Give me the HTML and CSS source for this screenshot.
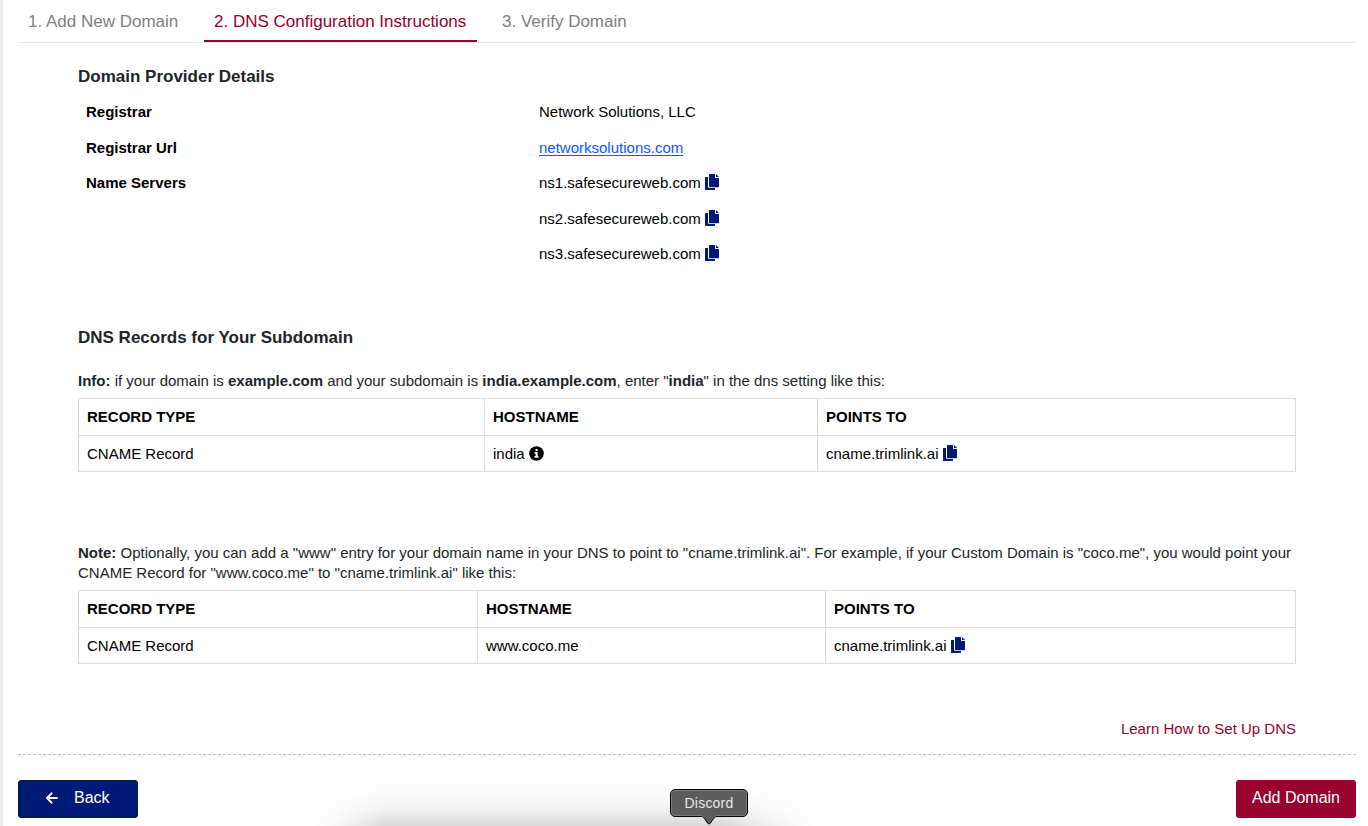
FILE: index.html
```html
<!DOCTYPE html>
<html lang="en">
<head>
<meta charset="utf-8">
<title>DNS Configuration Instructions</title>
<link rel="stylesheet" href="styles.css">
</head>
<body>
<svg class="defs" width="0" height="0">
  <symbol id="copy" viewBox="0 0 14 16">
    <path d="M4.800 0H10v3.200c0 .5.3.8.8.8H14v8.700c0 .3-.2.500-.5.500H4.500c-.3 0-.5-.2-.5-.5V.5c0-.3.2-.5.500-.5z"/>
    <path d="M11 0l3 3h-3z"/>
    <path d="M3 3H.5C.2 3 0 3.200 0 3.500v12c0 .3.200.5.500.5h9c.3 0 .5-.2.5-.5V14H4.200C3.500 14 3 13.500 3 12.800z"/>
  </symbol>
</svg>
<main class="page">
  <nav class="tabs">
    <a class="tab tab-one">1. Add New Domain</a>
    <a class="tab tab-two active">2. DNS Configuration Instructions</a>
    <a class="tab tab-three">3. Verify Domain</a>
  </nav>
  <div class="content">
    <h2 class="title provider-title">Domain Provider Details</h2>
    <dl class="details">
      <dt>Registrar</dt><dd>Network Solutions, LLC</dd>
      <dt>Registrar Url</dt><dd><a class="link">networksolutions.com</a></dd>
      <dt>Name Servers</dt><dd>ns1.safesecureweb.com <svg class="copy"><use href="#copy"/></svg></dd>
      <dt></dt><dd>ns2.safesecureweb.com <svg class="copy"><use href="#copy"/></svg></dd>
      <dt></dt><dd>ns3.safesecureweb.com <svg class="copy"><use href="#copy"/></svg></dd>
    </dl>
    <h2 class="title records-title">DNS Records for Your Subdomain</h2>
    <p class="text info"><b>Info:</b> if your domain is <b>example.com</b> and your subdomain is <b>india.example.com</b>, enter "<b>india</b>" in the dns setting like this:</p>
    <table class="records sub">
      <colgroup><col class="c1"><col class="c2"><col class="c3"></colgroup>
      <tr><th>RECORD TYPE</th><th>HOSTNAME</th><th>POINTS TO</th></tr>
      <tr><td>CNAME Record</td><td>india <svg class="info-icon" viewBox="0 0 15 15"><circle cx="7.500" cy="7.500" r="7.300"/><path class="glyph" d="M6.500 3h2.100v2.100H6.500zM5.600 6.100h3v4h.9v1.600H5.500v-1.600h1.100V7.700h-1z"/></svg></td><td>cname.trimlink.ai <svg class="copy"><use href="#copy"/></svg></td></tr>
    </table>
    <p class="text note"><b>Note:</b> Optionally, you can add a "www" entry for your domain name in your DNS to point to "cname.trimlink.ai". For example, if your Custom Domain is "coco.me", you would point your<br>CNAME Record for "www.coco.me" to "cname.trimlink.ai" like this:</p>
    <table class="records www">
      <colgroup><col class="c1"><col class="c2"><col class="c3"></colgroup>
      <tr><th>RECORD TYPE</th><th>HOSTNAME</th><th>POINTS TO</th></tr>
      <tr><td>CNAME Record</td><td>www.coco.me</td><td>cname.trimlink.ai <svg class="copy"><use href="#copy"/></svg></td></tr>
    </table>
    <div class="learn"><a>Learn How to Set Up DNS</a></div>
  </div>
  <svg class="rule" width="1338" height="1"><path d="M0 .5H1338"/></svg>
  <footer class="actions">
    <button class="btn back"><svg class="arrow" viewBox="0 0 12 12"><path d="M11 6H1.300M5.600 1.400L1 6l4.600 4.600"/></svg><span>Back</span></button>
    <button class="btn add">Add Domain</button>
  </footer>
</main>
<div class="dock-shadow"></div>
<div class="tooltip">
  <svg class="bubble" viewBox="0 0 78 37"><path class="edge" d="M5 .5H73a4.500 4.500 0 0 1 4.500 4.500V23a4.500 4.500 0 0 1-4.500 4.500H47c-2 0-2.500 1-3.500 2.200l-3.300 4.700q-1.200 1.200-2.400 0l-3.300-4.700C33.500 28.500 33 27.500 31 27.500H5A4.500 4.500 0 0 1 .5 23V5A4.500 4.500 0 0 1 5 .5z"/><rect class="inner" x="1.500" y="1.500" width="75" height="25" rx="3.500"/><path class="join" d="M32 25H46V28H32z"/></svg>
  <span>Discord</span>
</div>
</body>
</html>
```
FILE: styles.css
```css
* { box-sizing: border-box; }
body { margin: 0; width: 1368px; height: 826px; overflow: hidden; background: #fff; color: #000; font: 15px/19.5px "Liberation Sans", Arial, sans-serif; position: relative; }
.defs { position: absolute; }
.page { height: 826px; border-left: 3px solid #ebeaf1; padding: 0 12px 0 15px; display: flex; flex-direction: column; }
.tabs { height: 43px; flex: none; display: flex; border-bottom: 1px solid #e7e7e7; }
.tab { height: 42px; padding: 12px 10px 0; font-size: 17px; line-height: 20px; color: #808080; white-space: nowrap; }
.tab-one { width: 170px; margin-right: 16px; }
.tab-two { width: 273px; margin-right: 15px; }
.tab.active { color: #98002e; border-bottom: 2px solid #98002e; }
.content { padding: 0 60px; height: 711px; flex: none; }
.title { margin: 0; font-size: 17px; line-height: 22px; font-weight: bold; color: #212529; white-space: nowrap; }
.provider-title { padding-top: 23px; }
.details { margin: 6px 0 0; display: grid; grid-template-columns: 453px 1fr; grid-auto-rows: 35.5px; padding-left: 8px; }
.details dt, .details dd { margin: 0; padding-top: 8px; white-space: nowrap; }
.details dt { font-weight: bold; }
.link { color: #1155fa; text-decoration: underline; text-underline-offset: 2px; }
.copy { display: inline-block; width: 14px; height: 16px; fill: #001a78; vertical-align: -2px; }
.info-icon { width: 15px; height: 15px; vertical-align: -2px; }
.glyph { fill: #fff; }
.records-title { margin-top: 55px; }
.text { margin: 0; line-height: 20px; color: #212529; white-space: nowrap; }
.info { margin-top: 22px; }
.records { margin-top: 7px; width: 1218px; border-collapse: collapse; table-layout: fixed; }
.records th, .records td { border: 1px solid #d7dbe0; padding: 0 8px; text-align: left; white-space: nowrap; }
.records th { height: 37px; }
.records td { height: 36px; padding-top: 2px; }
.sub .c1 { width: 406px; }
.sub .c2 { width: 333px; }
.www .c1 { width: 399px; }
.www .c2 { width: 348px; }
.note { margin-top: 71px; }
.learn { margin-top: 55px; text-align: right; color: #98002e; }
.rule { flex: none; display: block; }
.rule path { stroke: #bcbcbc; stroke-dasharray: 3 2; }
.actions { display: flex; justify-content: space-between; padding-top: 25px; }
.btn { width: 120px; height: 38px; padding: 0 0 3px; border: 0; border-radius: 3px; color: #fff; font: 16px/20px "Liberation Sans", Arial, sans-serif; white-space: nowrap; }
.back { background: #001a78; border: 1px solid #101828; display: flex; align-items: center; padding-left: 27px; gap: 16px; }
.arrow { width: 12px; height: 12px; fill: none; stroke: #fff; stroke-width: 2; stroke-linecap: round; stroke-linejoin: round; }
.add { background: #98002e; }
.dock-shadow { position: absolute; left: 290px; bottom: 0; width: 540px; height: 56px; overflow: hidden; background: linear-gradient(to bottom, rgba(0,0,0,0) 0%, rgba(0,0,0,.01) 40%, rgba(0,0,0,.05) 70%, rgba(0,0,0,.15) 100%); -webkit-mask-image: linear-gradient(to right, transparent 4%, rgba(0,0,0,.2) 9%, #000 18%, #000 80%, rgba(0,0,0,.3) 90%, transparent 97%); mask-image: linear-gradient(to right, transparent 4%, rgba(0,0,0,.2) 9%, #000 18%, #000 80%, rgba(0,0,0,.3) 90%, transparent 97%); }
.tooltip { position: absolute; left: 670px; top: 789px; width: 78px; height: 37px; color: #e8e8e8; font-size: 14px; line-height: 28px; text-align: center; }
.tooltip span { position: relative; letter-spacing: .2px; }
.bubble { position: absolute; left: 0; top: 0; width: 78px; height: 37px; }
.edge { fill: #5c5c5c; stroke: #050505; }
.inner { fill: none; stroke: #797979; }
.join { fill: #5c5c5c; }
```
